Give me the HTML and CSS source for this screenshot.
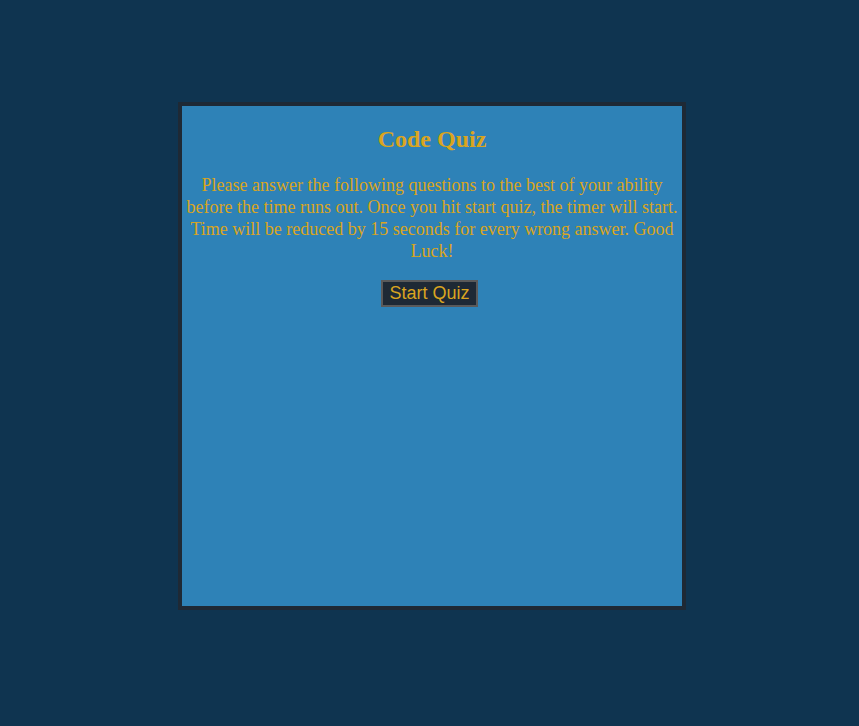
FILE: index.html
```html
<!DOCTYPE html>
<html>
<head>
<meta charset="utf-8">
<link rel="stylesheet" href="styles.css">
</head>
<body>
<main class="quiz-box">
  <h2 class="title">Code Quiz</h2>
  <p class="intro">Please answer the following questions to the best of your ability before the time runs out. Once you hit start quiz, the timer will start. Time will be reduced by 15 seconds for every wrong answer. Good Luck!</p>
  <button class="start-btn">Start Quiz</button>
</main>
</body>
</html>
```
FILE: styles.css
```css
html, body {
  margin: 0;
  padding: 0;
}
body {
  background: #0f3450;
  min-height: 726px;
  font-family: "Liberation Serif", "Times New Roman", serif;
  padding-top: 102px;
  padding-left: 178px;
  box-sizing: border-box;
}
.quiz-box {
  width: 500px;
  height: 500px;
  background: #2e82b7;
  border: 4px solid #1e2935;
  text-align: center;
  color: #daa520;
  box-sizing: content-box;
}
.title {
  font-size: 24px;
  font-weight: bold;
  margin: 20px 0;
}
.intro {
  font-size: 18px;
  line-height: 22px;
  margin: 21px 0 18px;
}
.start-btn {
  font-family: "Liberation Sans", Arial, sans-serif;
  font-size: 18px;
  color: #daa520;
  background: #1e2935;
  border: 2px solid #5a5a5a;
  padding: 1px 6px;
  margin: 0 5px 0 0;
}
```
